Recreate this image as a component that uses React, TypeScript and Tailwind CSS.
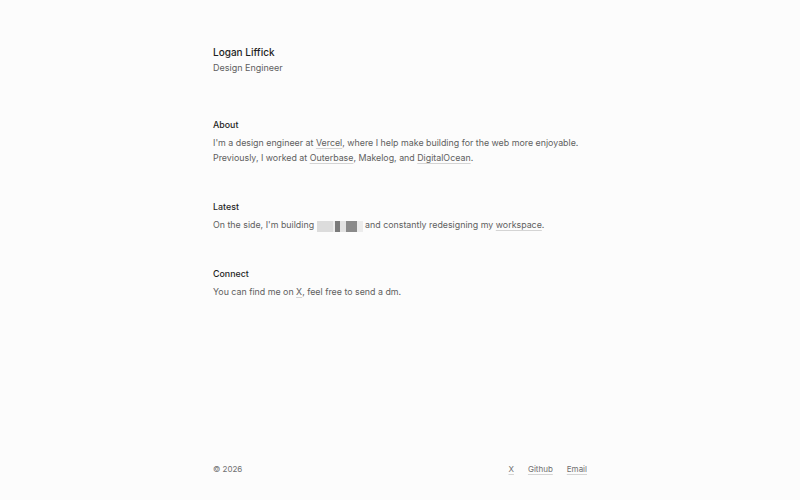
const link = 'underline decoration-[#d4d4d4] underline-offset-2';

function Redacted() {
  const blocks: [number, string][] = [
    [16, 'bg-[#dcdcdc]'],
    [2, 'bg-[#ececec]'],
    [5, 'bg-[#7a7a7a]'],
    [6, 'bg-[#e2e2e2]'],
    [11, 'bg-[#8a8a8a]'],
    [6, 'bg-[#ececec]'],
  ];
  return (
    <span className="inline-flex h-[11px] translate-y-[1px] align-middle">
      {blocks.map(([w, c], i) => (
        <span key={i} className={`h-full ${c}`} style={{ width: w }} />
      ))}
    </span>
  );
}

function Section({ title, children }: { title: string; children: React.ReactNode }) {
  return (
    <section className="flex flex-col gap-[3px]">
      <h2 className="font-medium text-[#1f1f1f]">{title}</h2>
      <div className="text-[#606060]">{children}</div>
    </section>
  );
}

export default function App() {
  return (
    <div
      className="flex h-[500px] flex-col bg-[#fcfcfc] text-[8.85px] leading-[15px] antialiased"
      style={{ fontFamily: 'Inter, "Noto Sans", sans-serif' }}
    >
      <main className="mx-auto flex w-[374px] flex-1 flex-col pt-[45px]">
        <header className="mb-[42px]">
          <h1 className="text-[10px] font-medium text-[#1f1f1f]">Logan Liffick</h1>
          <p className="text-[9px] text-[#606060]">Design Engineer</p>
        </header>
        <div className="flex flex-col gap-[34px]">
          <Section title="About">
            <p>
              I'm a design engineer at <a className={link}>Vercel</a>, where I help make building for the web more
              enjoyable. Previously, I worked at <a className={link}>Outerbase</a>, Makelog, and{' '}
              <a className={link}>DigitalOcean</a>.
            </p>
          </Section>
          <Section title="Latest">
            <p>
              On the side, I'm building <Redacted /> and constantly redesigning my{' '}
              <a className={link}>workspace</a>.
            </p>
          </Section>
          <Section title="Connect">
            <p>
              You can find me on <a className={link}>X</a>, feel free to send a dm.
            </p>
          </Section>
        </div>
      </main>
      <footer className="mx-auto flex w-[374px] items-center justify-between pb-[23px] text-[8px] text-[#707070]">
        <span>© 2026</span>
        <nav className="flex gap-[14px]">
          <a className={link}>X</a>
          <a className={link}>Github</a>
          <a className={link}>Email</a>
        </nav>
      </footer>
    </div>
  );
}
